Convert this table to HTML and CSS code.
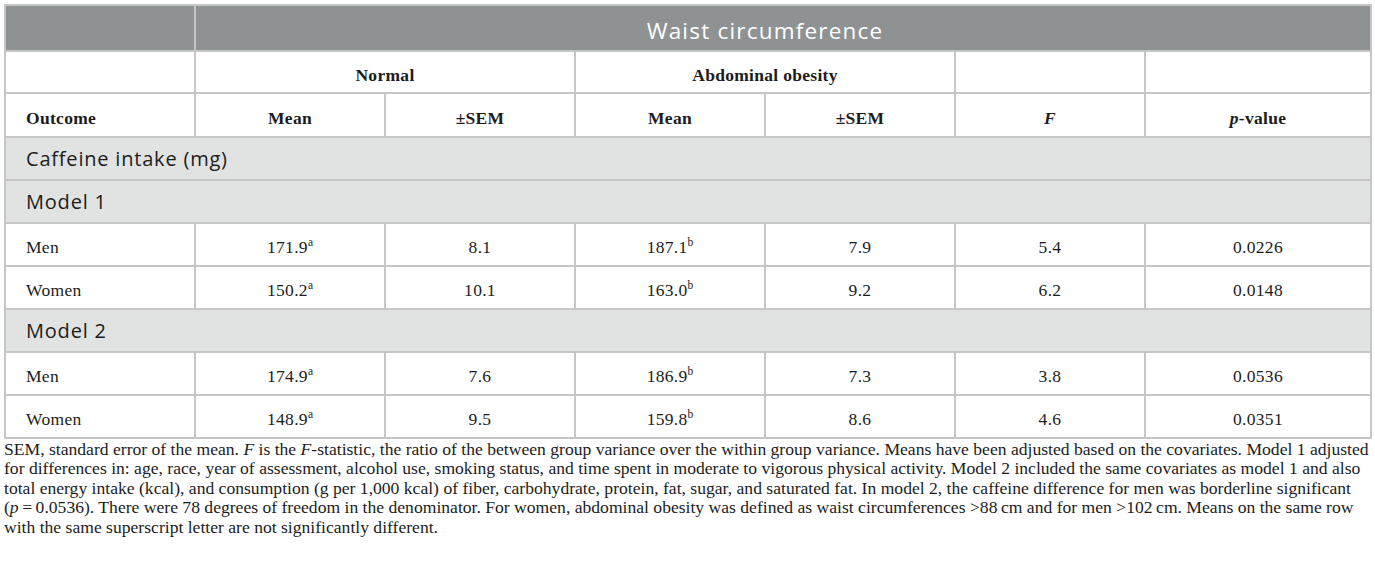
FILE: index.html
```html
<!DOCTYPE html>
<html>
<head>
<meta charset="utf-8">
<link rel="stylesheet" href="styles.css">
</head>
<body>
<div class="wrap">
<table class="tbl">
  <colgroup>
    <col class="c"><col class="c"><col class="c"><col class="c"><col class="c"><col class="c"><col class="clast">
  </colgroup>
  <thead>
    <tr class="top">
      <th class="blank"></th>
      <th colspan="6" class="title">Waist circumference</th>
    </tr>
    <tr class="grp grp1">
      <th></th>
      <th colspan="2">Normal</th>
      <th colspan="2">Abdominal obesity</th>
      <th></th>
      <th></th>
    </tr>
    <tr class="grp grp2">
      <th class="left">Outcome</th>
      <th>Mean</th>
      <th>±SEM</th>
      <th>Mean</th>
      <th>±SEM</th>
      <th><i>F</i></th>
      <th><i>p</i>-value</th>
    </tr>
  </thead>
  <tbody>
    <tr class="sec"><td colspan="7">Caffeine intake (mg)</td></tr>
    <tr class="sec"><td colspan="7">Model 1</td></tr>
    <tr class="row"><td class="left">Men</td><td>171.9<sup>a</sup></td><td>8.1</td><td>187.1<sup>b</sup></td><td>7.9</td><td>5.4</td><td>0.0226</td></tr>
    <tr class="row"><td class="left">Women</td><td>150.2<sup>a</sup></td><td>10.1</td><td>163.0<sup>b</sup></td><td>9.2</td><td>6.2</td><td>0.0148</td></tr>
    <tr class="sec"><td colspan="7">Model 2</td></tr>
    <tr class="row"><td class="left">Men</td><td>174.9<sup>a</sup></td><td>7.6</td><td>186.9<sup>b</sup></td><td>7.3</td><td>3.8</td><td>0.0536</td></tr>
    <tr class="row"><td class="left">Women</td><td>148.9<sup>a</sup></td><td>9.5</td><td>159.8<sup>b</sup></td><td>8.6</td><td>4.6</td><td>0.0351</td></tr>
  </tbody>
</table>
<p class="note">SEM, standard error of the mean. <i>F</i> is the <i>F</i>-statistic, the ratio of the between group variance over the within group variance. Means have been adjusted based on the covariates. Model 1 adjusted for differences in: age, race, year of assessment, alcohol use, smoking status, and time spent in moderate to vigorous physical activity. Model 2 included the same covariates as model 1 and also total energy intake (kcal), and consumption (g per 1,000 kcal) of fiber, carbohydrate, protein, fat, sugar, and saturated fat. In model 2, the caffeine difference for men was borderline significant (<i>p</i>&#8201;=&#8201;0.0536). There were 78 degrees of freedom in the denominator. For women, abdominal obesity was defined as waist circumferences &gt;88&#8201;cm and for men &gt;102&#8201;cm. Means on the same row with the same superscript letter are not significantly different.</p>
</div>
</body>
</html>
```
FILE: styles.css
```css
html, body {
  margin: 0;
  padding: 0;
  background: #ffffff;
}
.wrap {
  padding: 4px 5px 0 4px;
  width: 1366px;
}
.tbl {
  border-collapse: collapse;
  table-layout: fixed;
  width: 1366px;
  font-family: "Liberation Serif", "Times New Roman", serif;
  font-size: 17.5px;
  letter-spacing: 0.3px;
  color: #1c1c1c;
}
.c { width: 190px; }
.clast { width: 226px; }
.tbl th, .tbl td {
  border: 2px solid #c6c6c6;
  text-align: center;
  vertical-align: middle;
  padding: 6px 20px 0 20px;
  height: 35px;
}
.tbl th { font-weight: bold; }
.tbl .left { text-align: left; }
.grp1 th { height: 34px; }
.grp2 th { height: 36px; }
.top th {
  background: #8e9293;
  height: 40px;
  padding-top: 4px;
}
.top .title {
  font-family: "Open Sans", sans-serif;
  font-weight: normal;
  font-size: 22.5px;
  letter-spacing: 1.2px;
  color: #ffffff;
  padding-right: 56px;
}
.sec td {
  background: #e1e3e2;
  text-align: left;
  font-family: "Open Sans", sans-serif;
  font-size: 20px;
  letter-spacing: 0.8px;
  color: #1c1c1c;
  padding: 0 20px;
  height: 41px;
}
.tbl sup {
  font-size: 11.5px;
  letter-spacing: 0;
  line-height: 0;
  vertical-align: 7px;
}
.note {
  margin: 1px 0 0 0;
  font-family: "Liberation Serif", "Times New Roman", serif;
  font-size: 17.6px;
  line-height: 19.4px;
  color: #1c1c1c;
}
```
